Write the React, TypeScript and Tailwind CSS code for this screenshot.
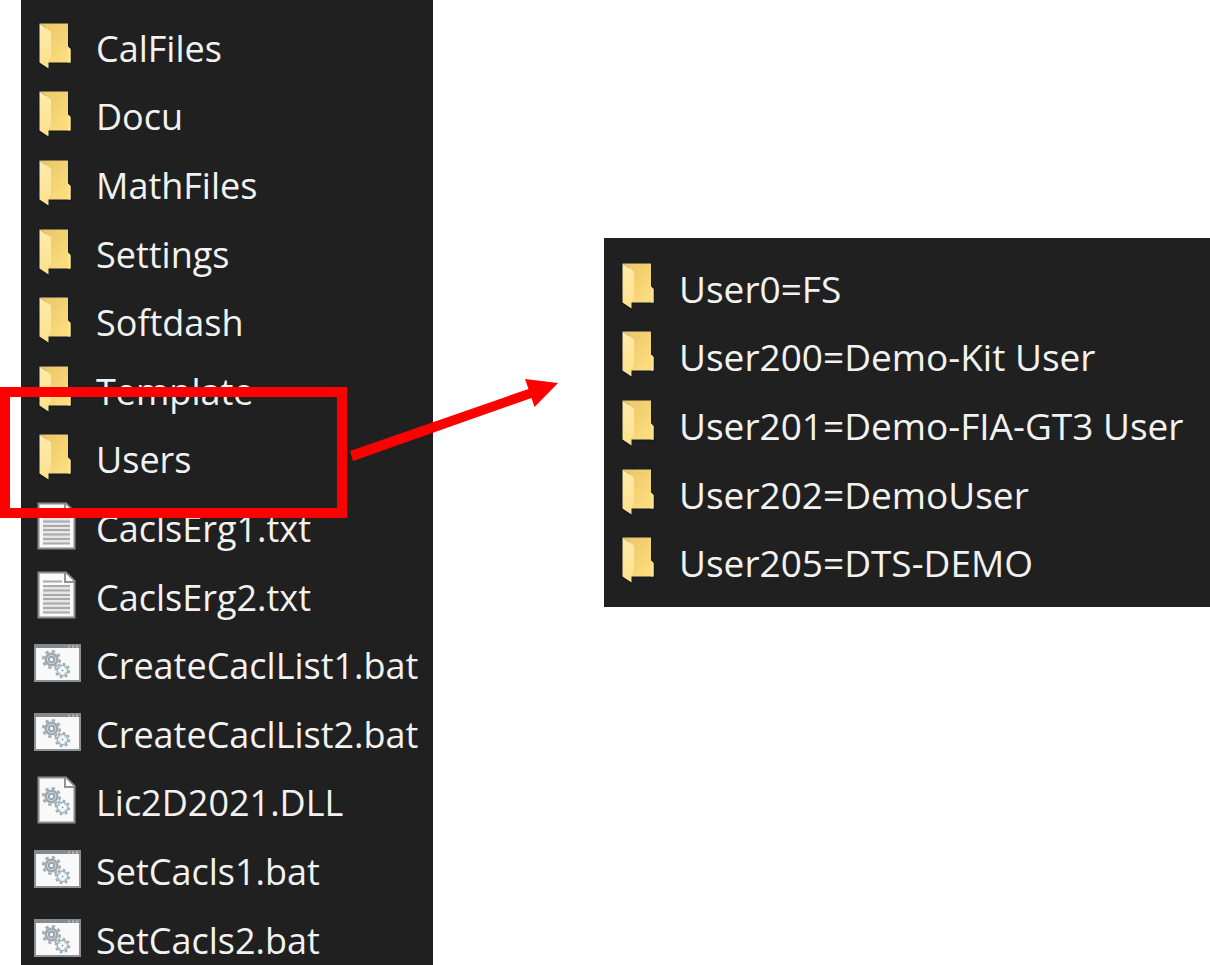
type IconType = 'folder' | 'text' | 'batch' | 'library';

type Entry = { name: string; icon: IconType };

const projectEntries: Entry[] = [
    { name: 'CalFiles', icon: 'folder' },
    { name: 'Docu', icon: 'folder' },
    { name: 'MathFiles', icon: 'folder' },
    { name: 'Settings', icon: 'folder' },
    { name: 'Softdash', icon: 'folder' },
    { name: 'Template', icon: 'folder' },
    { name: 'Users', icon: 'folder' },
    { name: 'CaclsErg1.txt', icon: 'text' },
    { name: 'CaclsErg2.txt', icon: 'text' },
    { name: 'CreateCaclList1.bat', icon: 'batch' },
    { name: 'CreateCaclList2.bat', icon: 'batch' },
    { name: 'Lic2D2021.DLL', icon: 'library' },
    { name: 'SetCacls1.bat', icon: 'batch' },
    { name: 'SetCacls2.bat', icon: 'batch' },
];

const userEntries: Entry[] = [
    { name: 'User0=FS', icon: 'folder' },
    { name: 'User200=Demo-Kit User', icon: 'folder' },
    { name: 'User201=Demo-FIA-GT3 User', icon: 'folder' },
    { name: 'User202=DemoUser', icon: 'folder' },
    { name: 'User205=DTS-DEMO', icon: 'folder' },
];

const FolderIcon = () => (
    <>
        <path d="M6 1.500H35V25L38 28V41H15V47L6 41Z" fill="#141a26" stroke="#141a26" strokeWidth="2" />
        <path d="M6.500 1.500H35V24.500L37.500 27V40.500H13V6Z" fill="url(#folder-back)" />
        <path d="M35 24.500L37.500 27V40.500H35Z" fill="#ffe48a" />
        <path d="M6.500 1.500L18 9.500V36L15.500 39V46.500L6.500 40.500Z" fill="url(#folder-front)" />
    </>
);

const Gears = () => (
    <>
        <circle cx="18.500" cy="20.500" r="8.300" fill="none" stroke="#a3abb1" strokeWidth="2.600" strokeDasharray="3.300 3.220" />
        <circle cx="18.500" cy="20.500" r="5.800" fill="#c8dbe8" stroke="#a0a9b0" strokeWidth="2.600" />
        <circle cx="18.500" cy="20.500" r="2.700" fill="#eef2f4" stroke="#8f989f" strokeWidth="1.500" />
        <circle cx="29.500" cy="31.500" r="6.800" fill="#f8f8f8" stroke="#a3abb1" strokeWidth="2" strokeDasharray="2.700 2.640" />
        <circle cx="29.500" cy="31.500" r="5.200" fill="#cfe8f5" stroke="#a6b1b9" strokeWidth="1.500" />
        <path d="M29.500 27.500V35.500M25.500 31.500H33.500" stroke="#fff" strokeWidth="2.500" />
        <circle cx="29.500" cy="31.500" r="1" fill="#8b959c" />
    </>
);

const Page = () => (
    <>
        <path d="M5.500 1.500H33L41.500 10V46.500H5.500Z" fill="#f9f9f9" stroke="#8b8b8b" strokeWidth="2" />
        <path d="M32 2V11H41" fill="#fff" stroke="#929292" strokeWidth="2" />
    </>
);

const TextIcon = () => (
    <>
        <Page />
        <path d="M10 14H37V42H10Z" fill="#e6e6e6" />
        <path d="M10 10.500H29M10 15H37M10 19.500H37M10 24H37M10 28H37M10 32.500H37M10 37H37M10 41.500H37" stroke="#a9a9a9" strokeWidth="2" />
    </>
);

const BatchIcon = () => (
    <>
        <path d="M2 6H47V42H2Z" fill="#f9f9f9" stroke="#8d9297" strokeWidth="2" />
        <path d="M1 5H48V9H1Z" fill="#858a8f" />
        <path d="M35 7.500H37M39 7.500H41M43 7.500H45" stroke="#b4b9bd" strokeWidth="2" />
        <Gears />
    </>
);

const LibraryIcon = () => (
    <>
        <Page />
        <Gears />
    </>
);

const icons = { folder: FolderIcon, text: TextIcon, batch: BatchIcon, library: LibraryIcon };

const FileRow = ({ name, icon }: Entry) => {
    const Icon = icons[icon];
    return (
        <li className="flex h-[69px] nth-[5n+2]:h-[68px] nth-[5n]:h-[68px] items-center gap-[15px]">
            <svg viewBox="0 0 48 48" className="size-12 shrink-0 mb-1.5" aria-hidden="true">
                <Icon />
            </svg>
            <span className="whitespace-nowrap">{name}</span>
        </li>
    );
};

export default function App() {
    return (
        <main className="flex h-screen items-start overflow-hidden bg-white font-['Open_Sans','Noto_Sans',sans-serif] leading-[52px] text-[#f2f2f2]">
            <svg className="absolute size-0" aria-hidden="true">
                <defs>
                    <linearGradient id="folder-back" x1="0" y1="0" x2="1" y2="1">
                        <stop offset="0" stopColor="#e9c566" />
                        <stop offset="1" stopColor="#ffe080" />
                    </linearGradient>
                    <linearGradient id="folder-front" x1="0" y1="0" x2="0" y2="1">
                        <stop offset="0" stopColor="#ffebad" />
                        <stop offset="1" stopColor="#fde08a" />
                    </linearGradient>
                </defs>
            </svg>

            <section className="relative shrink-0 pl-[21px]">
                <ul className="w-[412px] bg-[#202020] pt-[14px] pl-3 text-[36px]">
                    {projectEntries.map(entry => (
                        <FileRow key={entry.name} {...entry} />
                    ))}
                </ul>

                {/* Highlight around the Users folder, with an arrow to its content */}
                <div className="absolute top-[387px] left-0 h-[131px] w-[347px] border-10 border-[#ff0000]" />
                <svg viewBox="0 0 210 84" className="absolute top-[379px] left-[349px] h-[84px] w-[210px]" aria-hidden="true">
                    <path d="M1 72L179.500 10L176 0L209 4L185.500 28L182.500 19L4 82Z" fill="#ff0000" />
                </svg>
            </section>

            <ul className="mt-[238px] ml-[171px] grow bg-[#202020] pt-4 pb-[10px] pl-3 text-[37px]">
                {userEntries.map(entry => (
                    <FileRow key={entry.name} {...entry} />
                ))}
            </ul>
        </main>
    );
}
